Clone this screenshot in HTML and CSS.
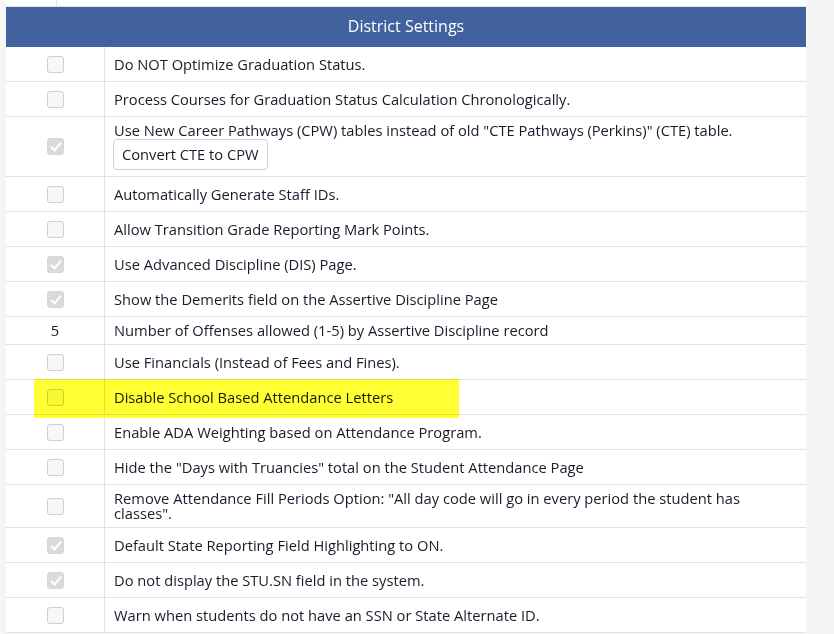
FILE: index.html
```html
<!DOCTYPE html>
<html>
  <head>
    <title>District Settings</title>
    <link rel="stylesheet" href="styles.css">
  </head>
  <body>
    <div class="settings">
      <div class="strip"><div class="strip-cell"></div></div>
      <div class="header">District Settings</div>

      <div class="row">
        <div class="opt"><span class="box"></span></div>
        <div class="label">Do NOT Optimize Graduation Status.</div>
      </div>
      <div class="row">
        <div class="opt"><span class="box"></span></div>
        <div class="label">Process Courses for Graduation Status Calculation Chronologically.</div>
      </div>
      <div class="row">
        <div class="opt"><span class="box checked"></span></div>
        <div class="label">
          Use New Career Pathways (CPW) tables instead of old "CTE Pathways (Perkins)" (CTE) table.<br>
          <button class="btn">Convert CTE to CPW</button>
        </div>
      </div>
      <div class="row">
        <div class="opt"><span class="box"></span></div>
        <div class="label">Automatically Generate Staff IDs.</div>
      </div>
      <div class="row">
        <div class="opt"><span class="box"></span></div>
        <div class="label">Allow Transition Grade Reporting Mark Points.</div>
      </div>
      <div class="row">
        <div class="opt"><span class="box checked"></span></div>
        <div class="label">Use Advanced Discipline (DIS) Page.</div>
      </div>
      <div class="row">
        <div class="opt"><span class="box checked"></span></div>
        <div class="label">Show the Demerits field on the Assertive Discipline Page</div>
      </div>
      <div class="row">
        <div class="opt num">5</div>
        <div class="label">Number of Offenses allowed (1-5) by Assertive Discipline record</div>
      </div>
      <div class="row">
        <div class="opt"><span class="box"></span></div>
        <div class="label">Use Financials (Instead of Fees and Fines).</div>
      </div>
      <div class="row">
        <div class="opt"><span class="box"></span></div>
        <div class="label">Disable School Based Attendance Letters</div>
        <div class="marker"></div>
      </div>
      <div class="row">
        <div class="opt"><span class="box"></span></div>
        <div class="label">Enable ADA Weighting based on Attendance Program.</div>
      </div>
      <div class="row">
        <div class="opt"><span class="box"></span></div>
        <div class="label">Hide the "Days with Truancies" total on the Student Attendance Page</div>
      </div>
      <div class="row">
        <div class="opt"><span class="box"></span></div>
        <div class="label">Remove Attendance Fill Periods Option: "All day code will go in every period the student has classes".</div>
      </div>
      <div class="row">
        <div class="opt"><span class="box checked"></span></div>
        <div class="label">Default State Reporting Field Highlighting to ON.</div>
      </div>
      <div class="row">
        <div class="opt"><span class="box checked"></span></div>
        <div class="label">Do not display the STU.SN field in the system.</div>
      </div>
      <div class="row">
        <div class="opt"><span class="box"></span></div>
        <div class="label">Warn when students do not have an SSN or State Alternate ID.</div>
      </div>
    </div>
  </body>
</html>
```

FILE: styles.css
```css
body {
  margin: 0;
  background: #f5f5f5;
  font-family: "Open Sans", "Liberation Sans", sans-serif;
  font-size: 14.7px;
  color: #1b1b2b;
  overflow: hidden;
}

.settings {
  width: 800px;
  margin-left: 6px;
  background: #fff;
}

.strip {
  height: 6px;
  border-bottom: 1px solid #e2e2e2;
}

.strip-cell {
  width: 50px;
  height: 6px;
  border-right: 1px solid #e2e2e2;
}

.header {
  background: #41619f;
  color: #fff;
  height: 40px;
  line-height: 39px;
  text-align: center;
  font-size: 16px;
}

.row {
  position: relative;
  display: grid;
  grid-template-columns: 99px 1fr;
  border-bottom: 1px solid #e2e2e2;
}

.opt {
  display: flex;
  align-items: center;
  justify-content: center;
  padding: 6px 0;
  min-height: 22px;
  border-right: 1px solid #e2e2e2;
}

.num {
  min-height: 15px;
  line-height: 15px;
}

.label {
  padding: 6px 40px 6px 9px;
  line-height: 15px;
  align-self: center;
}

.box {
  width: 15px;
  height: 15px;
  border: 1px solid #cfcfcf;
  border-radius: 3px;
  background: #f7f7f7;
  position: relative;
}

.box.checked {
  background: #dadada;
  border-color: #d6d6d6;
}

.box.checked::after {
  content: "";
  position: absolute;
  left: 5px;
  top: 1px;
  width: 4px;
  height: 9px;
  border: solid #fff;
  border-width: 0 2px 2px 0;
  transform: rotate(40deg);
}

.btn {
  font: inherit;
  color: inherit;
  background: #fff;
  border: 1px solid #cfcfcf;
  border-radius: 4px;
  height: 31px;
  padding: 0 8px;
  margin-top: 1px;
  margin-left: -1px;
}

.marker {
  position: absolute;
  left: 28px;
  top: -1px;
  width: 425px;
  height: 39px;
  background: #ffff33;
  mix-blend-mode: multiply;
  pointer-events: none;
}
```
